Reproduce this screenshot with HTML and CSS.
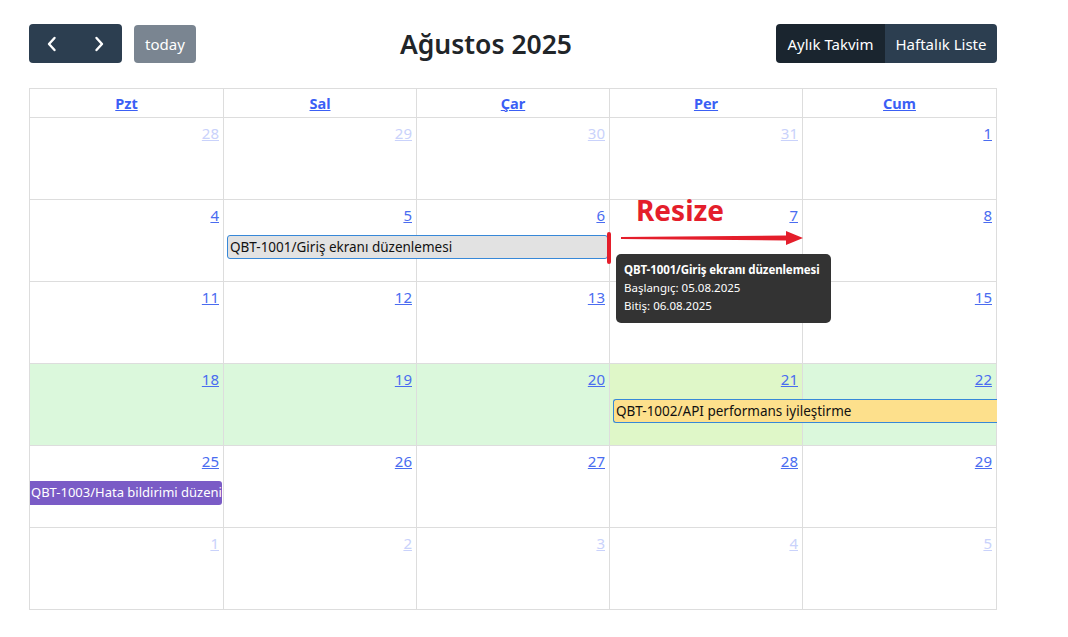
FILE: index.html
```html
<!DOCTYPE html>
<html lang="tr">
<head>
<meta charset="utf-8">
<link rel="stylesheet" href="styles.css">
</head>
<body>
<div class="page">
  <div class="toolbar">
    <div class="chunk left">
      <div class="btn-group">
        <button class="btn nav"><svg width="12" height="16" viewBox="0 0 12 16"><path d="M8.5 2 L3 8 L8.5 14" fill="none" stroke="#fff" stroke-width="2.4" stroke-linecap="round" stroke-linejoin="round"/></svg></button>
        <button class="btn nav"><svg width="12" height="16" viewBox="0 0 12 16"><path d="M3.5 2 L9 8 L3.5 14" fill="none" stroke="#fff" stroke-width="2.4" stroke-linecap="round" stroke-linejoin="round"/></svg></button>
      </div>
      <button class="btn today">today</button>
    </div>
    <h2 class="title">Ağustos 2025</h2>
    <div class="chunk right">
      <div class="btn-group">
        <button class="btn view active">Aylık Takvim</button>
        <button class="btn view">Haftalık Liste</button>
      </div>
    </div>
  </div>

  <div class="calendar">
    <div class="head">
      <div class="hcell"><a href="#">Pzt</a></div>
      <div class="hcell"><a href="#">Sal</a></div>
      <div class="hcell"><a href="#">Çar</a></div>
      <div class="hcell"><a href="#">Per</a></div>
      <div class="hcell"><a href="#">Cum</a></div>
    </div>

    <div class="week">
      <div class="day other c1"><a href="#">28</a></div>
      <div class="day other c2"><a href="#">29</a></div>
      <div class="day other c3"><a href="#">30</a></div>
      <div class="day other c4"><a href="#">31</a></div>
      <div class="day c5"><a href="#">1</a></div>
    </div>

    <div class="week">
      <div class="day c1"><a href="#">4</a></div>
      <div class="day c2"><a href="#">5</a></div>
      <div class="day c3"><a href="#">6</a></div>
      <div class="day c4"><a href="#">7</a></div>
      <div class="day c5"><a href="#">8</a></div>
      <div class="event ev-grey">QBT-1001/Giriş ekranı düzenlemesi<span class="handle"></span></div>
      <div class="annot">
        <span class="resize-label">Resize</span>
        <svg class="arrow" width="184" height="16" viewBox="0 0 184 16"><path d="M0 7 L165 5.5 L165 1 L182 8 L165 15 L165 10.5 L0 9 Z" fill="#e41e2b"/></svg>
      </div>
      <div class="tooltip">
        <div class="tt-title">QBT-1001/Giriş ekranı düzenlemesi</div>
        <div>Başlangıç: 05.08.2025</div>
        <div>Bitiş: 06.08.2025</div>
      </div>
    </div>

    <div class="week">
      <div class="day c1"><a href="#">11</a></div>
      <div class="day c2"><a href="#">12</a></div>
      <div class="day c3"><a href="#">13</a></div>
      <div class="day c4"><a href="#">14</a></div>
      <div class="day c5"><a href="#">15</a></div>
    </div>

    <div class="week green">
      <div class="day c1"><a href="#">18</a></div>
      <div class="day c2"><a href="#">19</a></div>
      <div class="day c3"><a href="#">20</a></div>
      <div class="day c4 today-cell"><a href="#">21</a></div>
      <div class="day c5"><a href="#">22</a></div>
      <div class="event ev-yellow">QBT-1002/API performans iyileştirme</div>
    </div>

    <div class="week">
      <div class="day c1"><a href="#">25</a></div>
      <div class="day c2"><a href="#">26</a></div>
      <div class="day c3"><a href="#">27</a></div>
      <div class="day c4"><a href="#">28</a></div>
      <div class="day c5"><a href="#">29</a></div>
      <div class="event ev-purple">QBT-1003/Hata bildirimi düzeni</div>
    </div>

    <div class="week last">
      <div class="day other c1"><a href="#">1</a></div>
      <div class="day other c2"><a href="#">2</a></div>
      <div class="day other c3"><a href="#">3</a></div>
      <div class="day other c4"><a href="#">4</a></div>
      <div class="day other c5"><a href="#">5</a></div>
    </div>
  </div>
</div>
</body>
</html>
```

FILE: styles.css
```css
* { box-sizing: border-box; }
html, body { margin: 0; padding: 0; background: #fff; }
body {
  font-family: "Noto Sans", "Open Sans", sans-serif;
  color: #212529;
}
.page {
  padding: 24px 0 0 29px;
  width: 997px;
}
.toolbar {
  display: flex;
  align-items: center;
  justify-content: space-between;
  height: 39px;
  margin-bottom: 25px;
}
.chunk { display: flex; align-items: center; }
.chunk.left { gap: 12px; }
.btn-group { display: flex; }
.btn {
  border: 0;
  margin: 0;
  color: #fff;
  background: #2c3e50;
  font-family: inherit;
  font-size: 15px;
  height: 39px;
  cursor: pointer;
}
.btn-group .btn { border-radius: 0; }
.btn-group .btn:first-child { border-radius: 4px 0 0 4px; }
.btn-group .btn:last-child { border-radius: 0 4px 4px 0; }
.btn.nav {
  width: 46.5px;
  display: flex;
  align-items: center;
  justify-content: center;
  padding: 0;
}
.btn.today {
  width: 62px;
  height: 38px;
  margin-top: 1px;
  border-radius: 4px;
  background: #7a8591;
  padding: 0;
}
.btn.view { padding: 0; }
.btn.view.active { background: #1a252f; width: 109px; }
.btn.view:not(.active) { width: 112px; }
.title {
  margin: 0;
  font-size: 26.5px;
  font-weight: 600;
  color: #212529;
}

.calendar {
  width: 968px;
  border: 1px solid #dddddd;
  border-right: 0;
}
.head, .week {
  display: grid;
  grid-template-columns: 194px 193px 193px 193px 194px;
}
.hcell {
  height: 29px;
  border-right: 1px solid #ddd;
  border-bottom: 1px solid #ddd;
  text-align: center;
  padding-top: 3px;
}
.hcell a {
  color: #3b5ff5;
  font-weight: 700;
  font-size: 14.5px;
  text-decoration: underline;
}
.week {
  grid-template-rows: 35px 24px 23px;
  position: relative;
}
.week.last { grid-template-rows: 35px 24px 22px; }
.day {
  grid-row: 1 / 4;
  border-right: 1px solid #ddd;
  border-bottom: 1px solid #ddd;
  text-align: right;
  padding: 4px 4px 0 0;
}
.week.last .day { border-bottom: 0; }
.c1 { grid-column: 1; }
.c2 { grid-column: 2; }
.c3 { grid-column: 3; }
.c4 { grid-column: 4; }
.c5 { grid-column: 5; }
.day a {
  color: #4a6cf0;
  font-size: 15px;
  text-decoration: underline;
}
.day.other a { color: #c9d2fb; }
.week.green .day { background: #dbf8dc; }
.week.green .day.today-cell { background: #dff7c8; }

.event {
  grid-row: 2;
  position: relative;
  z-index: 2;
  font-size: 13.5px;
  line-height: 22px;
  height: 24px;
  white-space: nowrap;
  overflow: hidden;
  padding-left: 2px;
  color: #111;
}
.ev-grey {
  grid-column: 2 / 4;
  margin: 0 2px 0 3px;
  background: #e2e2e2;
  border: 1px solid #3788d8;
  border-radius: 3px;
  overflow: visible;
}
.handle {
  position: absolute;
  right: -4px;
  top: -4px;
  width: 4px;
  height: 32px;
  background: #e41e2b;
  border-radius: 2px;
}
.ev-yellow {
  grid-column: 4 / 6;
  margin-left: 3px;
  background: #fde08c;
  border: 1px solid #3788d8;
  border-right: 0;
  border-radius: 3px 0 0 3px;
}
.ev-purple {
  grid-column: 1;
  margin-right: 2px;
  background: #7a5bc6;
  color: #fff;
  border-radius: 0 3px 3px 0;
  padding-left: 1px;
  font-size: 13px;
}

.annot {
  position: absolute;
  left: 591px;
  top: -3px;
  z-index: 3;
  width: 190px;
  height: 50px;
}
.resize-label {
  position: absolute;
  left: 15px;
  top: -4px;
  color: #e41e2b;
  font-weight: 700;
  font-size: 28px;
  line-height: 34px;
}
.arrow {
  position: absolute;
  left: 0;
  top: 33px;
}
.tooltip {
  position: absolute;
  left: 586px;
  top: 54px;
  z-index: 4;
  width: 215px;
  height: 69px;
  background: #333333;
  color: #fff;
  border-radius: 5px;
  padding: 7px 8px;
  font-size: 11.5px;
  line-height: 18px;
  white-space: nowrap;
}
.tt-title { font-weight: 700; letter-spacing: -0.1px; }
```
